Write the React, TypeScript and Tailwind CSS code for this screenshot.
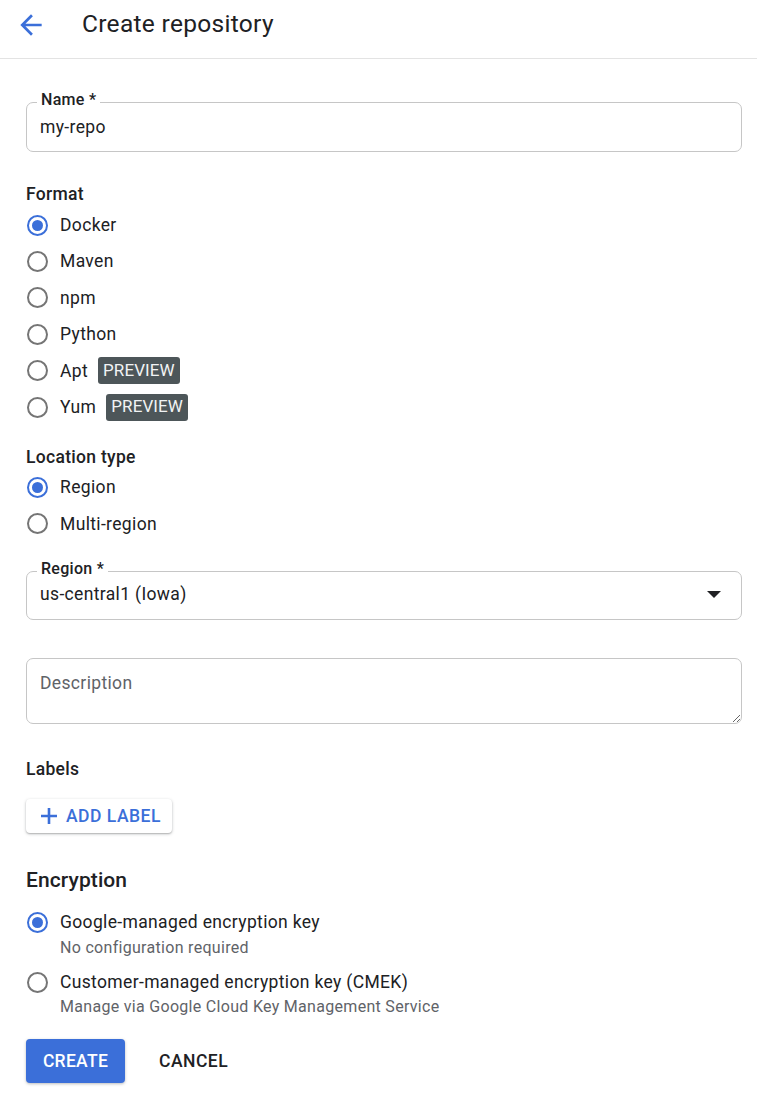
import React from "react";

const font = { fontFamily: "Roboto, 'Noto Sans', Arial, sans-serif" };

function Radio({ checked }: { checked?: boolean }) {
  return (
    <span
      className={`ml-px flex h-[21px] w-[21px] shrink-0 items-center justify-center rounded-full border-2 ${
        checked ? "border-[#3b6fd9]" : "border-[#757575]"
      }`}
    >
      {checked && <span className="h-[11px] w-[11px] rounded-full bg-[#3b6fd9]" />}
    </span>
  );
}

function RadioRow({ label, checked, badge }: { label: string; checked?: boolean; badge?: boolean }) {
  return (
    <div className="flex h-[36.4px] items-center">
      <Radio checked={checked} />
      <span className="ml-[12px] text-[17.5px] tracking-[0.35px] text-[#202124]">{label}</span>
      {badge && (
        <span className="ml-[10px] flex h-[27px] items-center rounded-[3px] bg-[#4d5659] px-[5px] text-[17px] tracking-[0.1px] text-[#f1f3f4]">
          PREVIEW
        </span>
      )}
    </div>
  );
}

function SectionLabel({ children }: { children: React.ReactNode }) {
  return (
    <div className="h-5 text-[17.5px] font-medium leading-5 tracking-[0.3px] text-[#202124]">{children}</div>
  );
}

export default function App() {
  return (
    <div className="min-h-[1099px] w-[757px] bg-white" style={font}>
      <header className="flex h-[59px] items-start border-b border-[#e3e3e3] pt-[8px]">
        <svg className="ml-[15px] mt-px" width="32" height="32" viewBox="0 0 24 24" fill="#3b6fd9">
          <path d="M20 11H7.83l5.59-5.59L12 4l-8 8 8 8 1.41-1.41L7.83 13H20v-2z" />
        </svg>
        <h1 className="ml-[35px] text-[24.5px] leading-8 tracking-[0.3px] text-[#202124]">Create repository</h1>
      </header>

      <main className="pl-[26px] pr-[15px] pt-[43px]">
        <div className="relative flex h-[50px] items-center rounded-[7px] border border-[#c6c6c6] px-[13px]">
          <span className="absolute left-[10px] top-[-11px] bg-white px-[4px] text-[16px] font-medium leading-4 tracking-[0.3px] text-[#202124]">
            Name *
          </span>
          <span className="text-[17.5px] tracking-[0.35px] text-[#202124]">my-repo</span>
        </div>

        <div className="mt-[32px]">
          <SectionLabel>Format</SectionLabel>
          <div className="mt-[3px]">
            <RadioRow label="Docker" checked />
            <RadioRow label="Maven" />
            <RadioRow label="npm" />
            <RadioRow label="Python" />
            <RadioRow label="Apt" badge />
            <RadioRow label="Yum" badge />
          </div>
        </div>

        <div className="mt-[22px]">
          <SectionLabel>Location type</SectionLabel>
          <div className="mt-[2px]">
            <RadioRow label="Region" checked />
            <RadioRow label="Multi-region" />
          </div>
        </div>

        <div className="relative mt-[29px] flex h-[49px] items-center rounded-[7px] border border-[#c6c6c6] pb-[3px] pl-[13px] pr-[20px]">
          <span className="absolute left-[10px] top-[-11px] bg-white px-[4px] text-[16px] font-medium leading-4 tracking-[0.3px] text-[#202124]">
            Region *
          </span>
          <span className="flex-1 text-[17.5px] tracking-[0.35px] text-[#202124]">us-central1 (Iowa)</span>
          <svg width="14" height="7" viewBox="0 0 14 7">
            <path d="M0 0h14L7 7z" fill="#202124" />
          </svg>
        </div>

        <textarea
          placeholder="Description"
          className="mt-[38px] block h-[66px] w-full rounded-[7px] border border-[#c6c6c6] px-[13px] pt-[14px] text-[17.5px] leading-5 tracking-[0.35px] text-[#202124] outline-none placeholder:text-[#5f6368]"
        />

        <div className="mt-[35px]">
          <SectionLabel>Labels</SectionLabel>
        </div>

        <button className="mt-[20px] flex h-[34px] w-[146px] items-center rounded-[4px] bg-white pl-[14px] text-[17.5px] font-medium tracking-[0.5px] text-[#3b6fd9] shadow-[0_1px_3px_rgba(60,64,67,0.35),0_1px_1px_rgba(60,64,67,0.15)]">
          <svg width="18" height="18" viewBox="0 0 18 18" className="mr-[8px]">
            <path d="M9 1v16M1 9h16" stroke="#3b6fd9" strokeWidth="2.6" />
          </svg>
          ADD LABEL
        </button>

        <h2 className="mt-[35px] h-6 text-[21px] font-medium leading-6 tracking-[0.1px] text-[#202124]">
          Encryption
        </h2>

        <div className="mt-[18px] flex flex-col gap-[12px]">
          <div className="flex">
            <div className="flex h-6 items-center">
              <Radio checked />
            </div>
            <div className="ml-[12px]">
              <div className="text-[17.5px] leading-6 tracking-[0.35px] text-[#202124]">
                Google-managed encryption key
              </div>
              <div className="mt-[4px] text-[16px] leading-5 tracking-[0.3px] text-[#5f6368]">
                No configuration required
              </div>
            </div>
          </div>
          <div className="flex">
            <div className="flex h-6 items-center">
              <Radio />
            </div>
            <div className="ml-[12px]">
              <div className="text-[17.5px] leading-6 tracking-[0.35px] text-[#202124]">
                Customer-managed encryption key (CMEK)
              </div>
              <div className="mt-[3px] text-[16px] leading-5 tracking-[0.3px] text-[#5f6368]">
                Manage via Google Cloud Key Management Service
              </div>
            </div>
          </div>
        </div>

        <div className="mt-[22px] flex items-center">
          <button className="h-[44px] w-[99px] rounded-[4px] bg-[#3b6fd9] text-[17.5px] font-medium tracking-[0.3px] text-white shadow-[0_1px_3px_rgba(60,64,67,0.35)]">
            CREATE
          </button>
          <button className="ml-[34px] text-[17.5px] font-medium tracking-[0.5px] text-[#202124]">CANCEL</button>
        </div>
      </main>
    </div>
  );
}
